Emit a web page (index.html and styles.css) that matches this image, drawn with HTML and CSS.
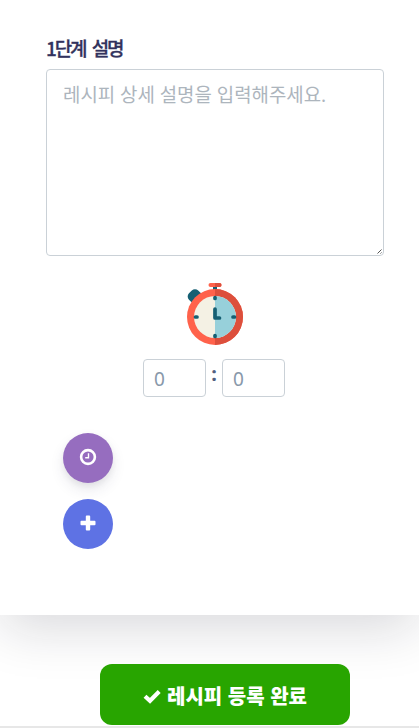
FILE: index.html
```html
<!DOCTYPE html>
<html lang="ko">
<head>
<meta charset="utf-8">
<meta name="viewport" content="width=device-width, initial-scale=1">
<title>레시피 등록</title>
<link rel="stylesheet" href="styles.css">
</head>
<body>
<main class="card">
  <label class="step-label" for="step">1단계 설명</label>
  <div class="description-wrap">
    <textarea class="field description" id="step" placeholder="레시피 상세 설명을 입력해주세요."></textarea>
    <svg class="grip" viewBox="0 0 5 5" aria-hidden="true"><path d="M.5 4.500l4-4M3.500 4.500l1-1" stroke="#555" stroke-width="1"/></svg>
  </div>
  <svg class="stopwatch" viewBox="0 0 60 66" aria-hidden="true">
    <rect x="3.500" y="8" width="13" height="13" rx="4.500" transform="rotate(-45 10 14.500)" fill="#155f73"/>
    <path d="M28 4h4v6h-4z" fill="#155f73"/>
    <rect x="23.5" y="1" width="13" height="4" rx="2" fill="#ff624b"/>
    <path d="M30 1h4.5a2 2 0 0 1 0 4H30z" fill="#dc4f3c"/>
    <circle cx="30" cy="35" r="28" fill="#ff624b"/>
    <path d="M30 7a28 28 0 0 1 0 56z" fill="#dc4f3c"/>
    <circle cx="30" cy="35" r="21" fill="#f4f1e4"/>
    <path d="M30 14a21 21 0 0 1 0 42z" fill="#97d0da"/>
    <path d="M30 15.500v1M30 53.500v1M10.500 35h1.500M48 35h1.500M30 27v9h4.500" fill="none" stroke="#155f73" stroke-width="3.700" stroke-linecap="round" stroke-linejoin="round"/>
  </svg>
  <div class="timer">
    <input class="field time" placeholder="0" aria-label="분">
    <span class="colon">:</span>
    <input class="field time" placeholder="0" aria-label="초">
  </div>
  <div class="actions">
    <button class="round clock" aria-label="타이머">
      <svg viewBox="0 0 18 18"><circle cx="9" cy="9" r="6.900" fill="none" stroke="#fff" stroke-width="2.600"/><path d="M9.500 5.300v4.500H6.200" fill="none" stroke="#fff" stroke-width="1.400"/></svg>
    </button>
    <button class="round add" aria-label="추가">
      <svg viewBox="0 0 18 18"><path d="M7.700 1.500h2.600q.9 0 .9.900v4.400h4.400q.9 0 .9.900v2.600q0 .9-.9.900h-4.400v4.400q0 .9-.9.900H7.700q-.9 0-.9-.9v-4.400H2.400q-.9 0-.9-.9V7.700q0-.9.900-.9h4.400V2.400q0-.9.900-.9z" fill="#fff"/></svg>
    </button>
  </div>
</main>
<div class="footer">
  <button class="submit">
    <svg viewBox="0 0 20 16"><path d="M3 8.200l5 4.600 9.200-9.200" fill="none" stroke="#fff" stroke-width="4.200"/></svg>
    <span>레시피 등록 완료</span>
  </button>
</div>
</body>
</html>
```
FILE: styles.css
```css
* { box-sizing: border-box; }
body {
  margin: 0;
  height: 728px;
  overflow: hidden;
  display: flex;
  flex-direction: column;
  background: #fff;
  font-family: "Noto Sans", "Noto Sans CJK KR", sans-serif;
}
.card {
  display: flex;
  flex-direction: column;
  height: 615px;
  padding: 34px 35px 0 46px;
  background: #fff;
  box-shadow: 0 15px 50px -2px rgba(20, 20, 40, .16);
}
.step-label {
  height: 35px;
  line-height: 28px;
  font-family: "Noto Sans CJK KR", sans-serif;
  font-size: 19px;
  font-weight: 500;
  letter-spacing: -2.1px;
  word-spacing: 3px;
  -webkit-text-stroke: .3px #32325d;
  color: #32325d;
}
.description-wrap {
  position: relative;
  width: 338px;
}
.grip {
  position: absolute;
  right: 2px;
  bottom: 2px;
  width: 5px;
  height: 5px;
}
.field {
  display: block;
  margin: 0;
  border: 1px solid #cad1d7;
  border-radius: 4px;
  background: #fff;
  font-family: inherit;
  font-size: 18px;
  outline: 0;
}
.field::placeholder { color: #adb5bd; opacity: 1; }
.description {
  width: 338px;
  height: 187px;
  padding: 11px 16px;
  font-size: 18.9px;
  line-height: 28px;
  resize: none;
}
.stopwatch {
  width: 60px;
  height: 66px;
  margin: 26px 0 0 139px;
}
.timer {
  display: flex;
  margin: 11px 0 0 97px;
}
.time {
  width: 63px;
  height: 38px;
  padding: 1px 10px 0;
  font-size: 19px;
}
.time::placeholder { color: #8898aa; }
.colon {
  width: 16px;
  text-align: center;
  font-size: 20px;
  line-height: 30px;
  font-weight: 700;
  color: #525f7f;
}
.actions {
  display: flex;
  flex-direction: column;
  gap: 15.5px;
  margin: 35.5px 0 0 16.5px;
}
.round {
  display: grid;
  place-items: center;
  width: 50.5px;
  height: 50.5px;
  padding: 0 0 1px;
  border: 0;
  border-radius: 50%;
}
.round svg { width: 18px; height: 18px; }
.clock {
  background: #966dbf;
  box-shadow: 0 7px 14px rgba(50, 50, 93, .1), 0 3px 6px rgba(0, 0, 0, .06);
}
.add { background: #5e72e4; }
.footer {
  display: flex;
  flex: 1;
  justify-content: center;
  align-items: flex-start;
  padding: 48.5px 0 0 31px;
  border-bottom: 2px solid #e7e7e7;
}
.submit {
  position: relative;
  display: flex;
  align-items: center;
  justify-content: center;
  gap: 5px;
  width: 250px;
  height: 61px;
  padding: 3px 1px 0 0;
  border: 0;
  border-radius: 12px;
  background: #28a500;
  color: #fff;
  font: 900 20px "Noto Sans CJK KR", sans-serif;
}
.submit svg { width: 20px; height: 16px; }
```
